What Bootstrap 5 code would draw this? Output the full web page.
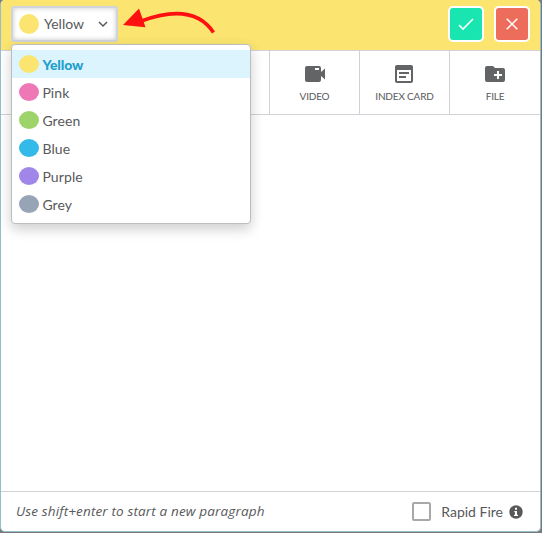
<!DOCTYPE html>
<html lang="en">
<head>
<meta charset="utf-8">
<meta name="viewport" content="width=device-width, initial-scale=1">
<title>Card editor</title>
<link href="https://cdn.jsdelivr.net/npm/bootstrap@5.3.0/dist/css/bootstrap.min.css" rel="stylesheet">
<style>
html{background:#77797b}
body{font-family:Lato,"Open Sans",sans-serif;color:#58595b;background:#77797b;height:533px;overflow:hidden;font-size:14px;line-height:20px}
.editor{width:541px;height:532px;background:#fff;border:solid #93c0cc;border-width:0 1px 1px;border-radius:5px}
.topbar{height:51px;background:#fbe570;border-bottom:1px solid #d0d2d8;padding:6px 10px 0;border-radius:4px 4px 0 0}
.picker{width:107px;height:36px;border:2px solid #cfd4dc;border-radius:3px;padding:0 8px 0 6px;color:#58595b;background:#fff!important;box-shadow:inset 0 0 5px rgba(0,0,0,.22)}
.dot{width:20px;height:20px;border-radius:50%;background:#fbe570;flex:none}
.picker .label{font-size:14px;margin-left:5px;line-height:20px}
.action{width:36px;height:36px;border:2px solid #fff;border-radius:5px}
.accept{background:#19e5b1!important}.cancel{background:#ee6c5c!important}
.color-menu{top:44px;left:11px;width:240px;height:180px;padding:5px 0;border:1px solid #bdbdbd;border-radius:4px;box-shadow:0 5px 13px rgba(0,0,0,.2);background:#fff;font-size:14px;z-index:5}
.color-menu .dropdown-item{height:28px;padding:0 7px;color:#58595b}
.color-menu .dot{height:18px}
.color-menu .item-name{margin-left:3.4px;padding-top:2px;letter-spacing:.1px}
.color-menu .active{background:#dbf4fe;color:#239fcb;font-weight:900}
.color-menu .active .item-name{letter-spacing:-.1px}
.dot-pink{background:#ee78b6}.dot-green{background:#9ed36a}.dot-blue{background:#34bae8}.dot-purple{background:#a186ea}.dot-grey{background:#96a4b5}
.tools{height:64px;border-bottom:1px solid #d0d2d8}
.tool{width:90px;border-right:1px solid #d0d2d8;font-size:10px;line-height:12px;letter-spacing:-.18px;padding-top:11px;color:#58595b}
.tool:first-child{width:89px}.tool:last-child{border-right:0}
.tool svg{width:24px;height:24px;margin-bottom:4px;fill:#636466}
.tool .card-icon{margin-right:1px}
.footer-bar{height:40px;border-top:1px solid #d0d2d8;padding:0 17px 0 15px}
.hint{font-family:"Open Sans",sans-serif;font-style:italic;font-size:13.5px;letter-spacing:.15px;margin-top:-1px}
.footer-bar .form-check-input{width:19px;height:19px;margin:0 10px 0 0;border:2px solid #a8a8a8;border-radius:2px}
.info-icon{margin-left:6px}
.arrow{left:118px;top:4px;z-index:2}
</style>
<script src="https://cdn.jsdelivr.net/npm/bootstrap@5.3.0/dist/js/bootstrap.bundle.min.js"></script>
</head>
<body class="position-relative">
<main class="editor d-flex flex-column">
  <header class="topbar d-flex align-items-start justify-content-between">
    <button class="btn picker d-flex align-items-center" type="button" aria-expanded="true"><span class="dot"></span><span class="label">Yellow</span>
      <svg class="ms-auto" width="10" height="8" viewBox="0 0 10 8" fill="none" stroke="#58595b" stroke-width="1.5"><path d="M1 2l4 4 4-4"/></svg>
    </button>
    <div class="d-flex" style="gap:10px">
      <button class="btn action accept p-0 d-flex align-items-center justify-content-center" aria-label="Save"><svg width="16" height="14" viewBox="0 0 16 14" fill="none" stroke="#fff" stroke-width="1.6"><path d="M1 8l4 4L15 2"/></svg></button>
      <button class="btn action cancel p-0 d-flex align-items-center justify-content-center" aria-label="Cancel"><svg width="12" height="12" viewBox="0 0 12 12" fill="none" stroke="#fff" stroke-width="1.5"><path d="M.7.7l10.6 10.6M11.3.7L.7 11.3"/></svg></button>
    </div>
  </header>
  <nav class="tools d-flex">
    <div class="tool"></div><div class="tool"></div><div class="tool"></div>
    <div class="tool d-flex flex-column align-items-center"><svg viewBox="0 0 24 24"><path fill-rule="evenodd" d="M4 4h12q2 0 2 2v4l4-3.500v11L18 14v4q0 2-2 2H4q-2 0-2-2V6q0-2 2-2zm8 2v2h4V6z"/></svg><span>VIDEO</span></div>
    <div class="tool d-flex flex-column align-items-center"><svg class="card-icon" viewBox="0 0 24 24"><path fill-rule="evenodd" d="M5 3h14q2 0 2 2v14q0 2-2 2H5q-2 0-2-2V5q0-2 2-2zm0 5v11h14V8zm2 2h10v2H7zm0 4h7v2H7z"/></svg><span class="text-nowrap">INDEX CARD</span></div>
    <div class="tool d-flex flex-column align-items-center"><svg viewBox="0 0 24 24"><path fill-rule="evenodd" d="M4 4h6l2 2h8q2 0 2 2v10q0 2-2 2H4q-2 0-2-2V6q0-2 2-2zm10 5v3h-3v2h3v3h2v-3h3v-2h-3V9z"/></svg><span>FILE</span></div>
  </nav>
  <section class="flex-grow-1"></section>
  <footer class="footer-bar d-flex align-items-center justify-content-between">
    <span class="hint">Use shift+enter to start a new paragraph</span>
    <label class="d-flex align-items-center"><input class="form-check-input" type="checkbox"><span>Rapid Fire</span>
      <svg class="info-icon" width="14" height="14" viewBox="0 0 14 14"><circle cx="7" cy="7" r="6.700" fill="#58595b"/><path fill="#fff" d="M6 2.800h2v2H6zM5.300 6H8v3.700h1V11H5V9.700h1V7.200h-.7z"/></svg></label>
  </footer>
</main>
<svg class="arrow position-absolute" width="102" height="34" viewBox="118 4 102 34"><path d="M140 21.500Q193 1.500 213.500 32.500" fill="none" stroke="#ff1010" stroke-width="3.600"/><path d="M123 25l16-16.500 6.500 18.800z" fill="#ff1010"/></svg>
<div class="color-menu position-absolute">
  <a class="dropdown-item active d-flex align-items-center"><span class="dot"></span><span class="item-name">Yellow</span></a>
  <a class="dropdown-item d-flex align-items-center"><span class="dot dot-pink"></span><span class="item-name">Pink</span></a>
  <a class="dropdown-item d-flex align-items-center"><span class="dot dot-green"></span><span class="item-name">Green</span></a>
  <a class="dropdown-item d-flex align-items-center"><span class="dot dot-blue"></span><span class="item-name">Blue</span></a>
  <a class="dropdown-item d-flex align-items-center"><span class="dot dot-purple"></span><span class="item-name">Purple</span></a>
  <a class="dropdown-item d-flex align-items-center"><span class="dot dot-grey"></span><span class="item-name">Grey</span></a>
</div>
</body>
</html>
